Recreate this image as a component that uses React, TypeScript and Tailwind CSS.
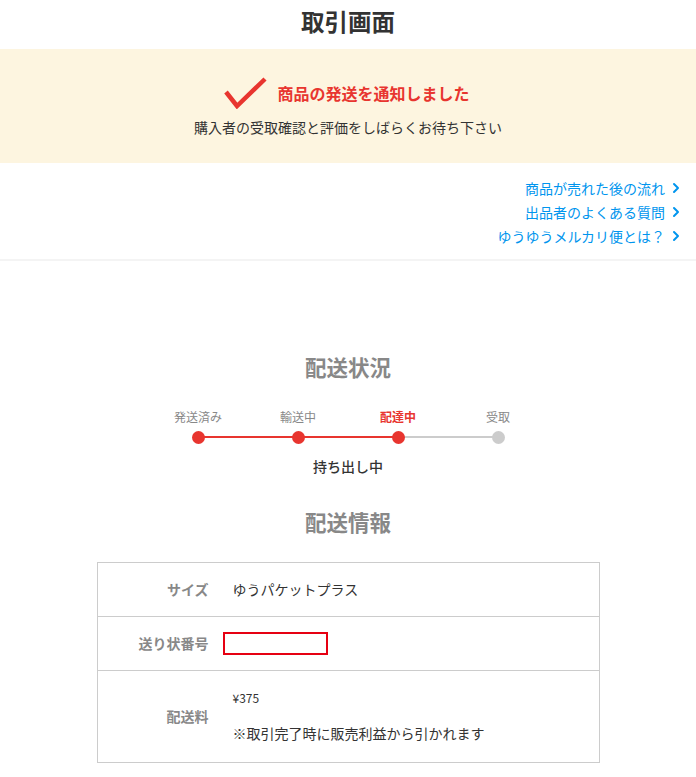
import { ChevronRight } from 'lucide-react';

const font = { fontFamily: '"Noto Sans CJK JP", "Noto Sans", sans-serif' };

const links = ['商品が売れた後の流れ', '出品者のよくある質問', 'ゆうゆうメルカリ便とは？'];

const steps = [
  { label: '発送済み', done: true },
  { label: '輸送中', done: true },
  { label: '配達中', done: true, current: true },
  { label: '受取', done: false },
];

export default function App() {
  return (
    <div style={font} className="w-[696px] min-h-[777px] bg-white text-[#333]">
      <h1 className="h-[49px] flex items-center justify-center pb-[5px] text-[23.5px] font-bold leading-none">取引画面</h1>

      <div className="h-[114px] bg-[#fdf5e0] flex flex-col items-center pt-[28px]">
        <div className="flex items-center gap-[8px]">
          <svg width="46" height="32" viewBox="0 0 46 32" className="ml-[-3px]">
            <path d="M3 15 L14 29 L42 2" fill="none" stroke="#e8352f" strokeWidth="4.5" />
          </svg>
          <span className="text-[16px] font-bold text-[#e8352f]">商品の発送を通知しました</span>
        </div>
        <p className="mt-[8px] text-[14px] text-[#333]">購入者の受取確認と評価をしばらくお待ち下さい</p>
      </div>

      <div className="flex flex-col items-end pt-[13px] pb-[11px] pr-[12px] border-b-2 border-[#f4f4f4]">
        {links.map((l) => (
          <a key={l} className="flex items-center h-[24px] text-[14px] text-[#0095ee]">
            {l}
            <ChevronRight className="ml-[3px]" size={16} strokeWidth={3} />
          </a>
        ))}
      </div>

      <h2 className="mt-[92px] text-center text-[21.5px] font-bold text-[#888] leading-[28px]">配送状況</h2>

      <div className="mx-auto mt-[28px] w-[400px] grid grid-cols-4">
        {steps.map((s, i) => (
          <div key={s.label} className="flex flex-col items-center">
            <span className={`text-[12px] leading-[16px] ${s.current ? 'text-[#e8352f] font-bold' : 'text-[#888]'}`}>{s.label}</span>
            <div className="relative mt-[6px] h-[12px] w-full flex justify-center">
              {i > 0 && (
                <div className={`absolute left-0 right-1/2 top-[5px] h-[2px] ${s.done ? 'bg-[#e8352f]' : 'bg-[#ccc]'}`} />
              )}
              {i < steps.length - 1 && (
                <div className={`absolute left-1/2 right-0 top-[5px] h-[2px] ${steps[i + 1].done ? 'bg-[#e8352f]' : 'bg-[#ccc]'}`} />
              )}
              <div className={`relative h-[13px] w-[13px] -mt-[0.5px] rounded-full ${s.done ? 'bg-[#e8352f]' : 'bg-[#ccc]'}`} />
            </div>
          </div>
        ))}
      </div>

      <p className="mt-[13px] text-center text-[14px] font-medium leading-[20px]">持ち出し中</p>

      <h2 className="mt-[32px] text-center text-[21.5px] font-bold text-[#888] leading-[28px]">配送情報</h2>

      <div className="mx-auto mt-[26px] w-[503px] border border-[#ccc]">
        <div className="flex h-[54px] items-center border-b border-[#ccc]">
          <div className="w-[112px] pr-[1px] text-right text-[14px] font-bold text-[#888]">サイズ</div>
          <div className="pl-[23px] text-[14px]">ゆうパケットプラス</div>
        </div>
        <div className="flex h-[54px] items-center border-b border-[#ccc]">
          <div className="w-[112px] pr-[1px] text-right text-[14px] font-bold text-[#888]">送り状番号</div>
          <div className="ml-[13px] h-[23px] w-[105px] border-2 border-[#e60012]" />
        </div>
        <div className="flex h-[91px] items-center">
          <div className="w-[112px] pr-[1px] text-right text-[14px] font-bold text-[#888]">配送料</div>
          <div className="pl-[23px] flex flex-col">
            <span className="text-[12px] leading-[16px]">¥375</span>
            <span className="mt-[17px] text-[14px] leading-[20px]">※取引完了時に販売利益から引かれます</span>
          </div>
        </div>
      </div>
    </div>
  );
}
